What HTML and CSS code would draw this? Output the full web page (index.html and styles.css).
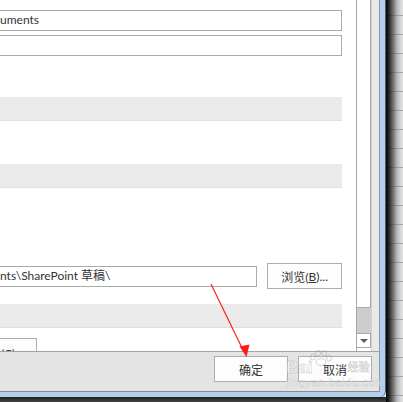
FILE: index.html
```html
<!DOCTYPE html>
<html lang="zh-CN">
<head>
<meta charset="utf-8">
<link rel="stylesheet" href="styles.css">
</head>
<body>
<div class="screen">
  <div class="left">
    <div class="frame">
      <div class="client">
        <div class="scrollarea">
          <div class="content">
            <div class="field f1">uments</div>
            <div class="field f2"></div>
            <div class="band b1"></div>
            <div class="band b2"></div>
            <div class="browse-row">
              <div class="field f3">nts\SharePoint 草稿\</div>
              <div class="btn browse">浏览(<u>B</u>)...</div>
            </div>
            <div class="band b3"></div>
            <div class="btn small"><span>(C)</span></div>
          </div>
          <div class="scrollbar">
            <div class="thumb"></div>
            <div class="track"></div>
            <div class="arrow"><span class="tri"></span></div>
          </div>
          <div class="strip"></div>
        </div>
        <div class="footer">
          <div class="btn fbtn">确定</div>
          <div class="btn fbtn">取消</div>
        </div>
      </div>
    </div>
    <div class="bottom-shadow"></div>
  </div>
  <div class="outside"><div class="shade"></div></div>
</div>
<svg class="arrow-anno" width="403" height="402" viewBox="0 0 403 402">
  <line x1="211" y1="284" x2="243" y2="350" stroke="#ff2020" stroke-width="1.2"/>
  <polygon points="246.5,357 239.5,346.5 249.5,344.5" fill="#ff1a1a"/>
</svg>
<div class="watermark">
  <div class="wm-top"><span class="wm-bai">Bai</span><svg class="wm-paw" width="24" height="16" viewBox="0 0 24 16"><g fill="none" stroke="rgba(150,150,150,0.4)" stroke-width="1"><ellipse cx="4" cy="7" rx="2.5" ry="3"/><ellipse cx="9" cy="3" rx="2.5" ry="3"/><ellipse cx="15" cy="3" rx="2.5" ry="3"/><ellipse cx="20" cy="8" rx="2.5" ry="3"/><ellipse cx="12" cy="12" rx="5" ry="3.5"/></g></svg><span class="wm-jy">经验</span></div>
  <div class="wm-url">jingyan.baidu.com</div>
</div>
</body>
</html>
```
FILE: styles.css
```css
* { box-sizing: border-box; }
html, body { margin: 0; padding: 0; background: #e4e4e4; }
body {
  width: 403px;
  height: 402px;
  overflow: hidden;
  position: relative;
  font-family: "Lato", "Noto Sans CJK SC", sans-serif;
  font-size: 12px;
  color: #333;
}
.screen {
  display: flex;
  width: 403px;
  height: 402px;
}
.left {
  width: 386px;
  flex-shrink: 0;
  display: flex;
  flex-direction: column;
}
.outside {
  width: 17px;
  height: 402px;
  flex-shrink: 0;
  background-color: #e2e2e2;
  background-image: repeating-linear-gradient(to bottom, #e2e2e2 0px, #e2e2e2 17px, #a8a8a8 17px, #a8a8a8 18px, #e2e2e2 18px, #e2e2e2 19px);
  background-position: 0 -2px;
}
.shade {
  width: 17px;
  height: 402px;
  background-image: linear-gradient(to right, rgba(0,0,0,1) 0px, rgba(20,20,20,0.9) 3px, rgba(55,55,55,0.68) 7px, rgba(110,110,110,0.38) 11px, rgba(170,170,170,0.12) 15px, rgba(0,0,0,0) 17px);
}
.bottom-shadow {
  height: 5px;
  background-image: linear-gradient(to bottom, #1e1e1e, #444444);
}
.frame {
  width: 386px;
  height: 397px;
  padding: 0 5px 5px 0;
  background: #b3cfee;
  border-right: 1px solid #4e5f72;
  border-bottom-right-radius: 6px;
}
.client {
  width: 380px;
  height: 392px;
  display: flex;
  flex-direction: column;
  background: #e4e4e4;
  border-right: 1px solid #8f9aa6;
  border-bottom: 1px solid #8a8a8a;
}
.scrollarea {
  height: 352px;
  display: flex;
  border-bottom: 1px solid #a3a3a3;
  flex-shrink: 0;
}
.content {
  width: 357px;
  height: 351px;
  overflow: hidden;
  background: #fff;
  padding-right: 14px;
  display: flex;
  flex-direction: column;
}
.content > * { flex-shrink: 0; }
.field {
  height: 21px;
  border: 1px solid #ababab;
  border-left: none;
  background: #fff;
  line-height: 18px;
  white-space: nowrap;
  color: #333;
}
.f1 { margin-top: 10px; }
.f2 { margin-top: 4px; }
.band {
  height: 24px;
  background: #eaeaea;
  border-bottom: 1px solid #dfdfdf;
}
.b1 { margin-top: 41px; }
.b2 { margin-top: 43px; }
.b3 { margin-top: 15px; }
.browse-row {
  margin-top: 75px;
  height: 26px;
  display: flex;
  align-items: center;
}
.f3 { width: 258px; }
.btn {
  border: 1px solid #adadad;
  background: #fdfdfd;
  display: flex;
  align-items: center;
  justify-content: center;
  color: #333;
  white-space: nowrap;
}
.browse {
  margin-left: 10px;
  width: 75px;
  height: 26px;
}
.small {
  margin-top: 10px;
  width: 37px;
  height: 24px;
  border-left: none;
  align-items: flex-start;
  justify-content: flex-start;
  padding: 7px 0 0 1px;
}
.scrollbar {
  width: 15px;
  display: flex;
  flex-direction: column;
  background: #fff;
  border-left: 1px solid #a8a8a8;
}
.thumb {
  flex: 1;
  background: #fff;
  border-right: 1px solid #a8a8a8;
  border-bottom: 1px solid #a8a8a8;
}
.track {
  height: 25px;
  background: #cdcdcd;
}
.arrow {
  height: 15px;
  border: 1px solid #a8a8a8;
  border-left: none;
  background: #fff;
  display: flex;
  align-items: center;
  justify-content: center;
  margin-bottom: 3px;
}
.tri {
  width: 0;
  height: 0;
  border-left: 4px solid transparent;
  border-right: 4px solid transparent;
  border-top: 4px solid #606060;
}
.strip {
  width: 8px;
  background: #e9e9e9;
  border-left: 1px solid #d2d2d2;
}
.footer {
  flex: 1;
  display: flex;
  justify-content: flex-end;
  align-items: flex-start;
  gap: 10px;
  padding: 4px 7px 0 0;
}
.fbtn {
  width: 74px;
  height: 26px;
  font-family: "Noto Sans CJK SC", sans-serif;
}
.arrow-anno {
  position: absolute;
  left: 0;
  top: 0;
  pointer-events: none;
}
.watermark {
  position: absolute;
  left: 286px;
  top: 350px;
  width: 94px;
  color: rgba(255,255,255,0.5);
  pointer-events: none;
}
.wm-top {
  display: flex;
  align-items: flex-start;
  height: 26px;
}
.wm-bai {
  margin-top: 9px;
  font: bold 17px/17px "Liberation Sans", sans-serif;
  -webkit-text-stroke: 0.8px rgba(150,150,150,0.35);
}
.wm-paw { margin-left: -3px; }
.wm-jy {
  margin-top: 10px;
  margin-left: 14px;
  font: 11px/13px "Noto Sans CJK SC", sans-serif;
  -webkit-text-stroke: 0.8px rgba(150,150,150,0.35);
}
.wm-url {
  font: 11px/12px "Liberation Sans", sans-serif;
  letter-spacing: 0.6px;
  -webkit-text-stroke: 0.5px rgba(150,150,150,0.35);
}
```
